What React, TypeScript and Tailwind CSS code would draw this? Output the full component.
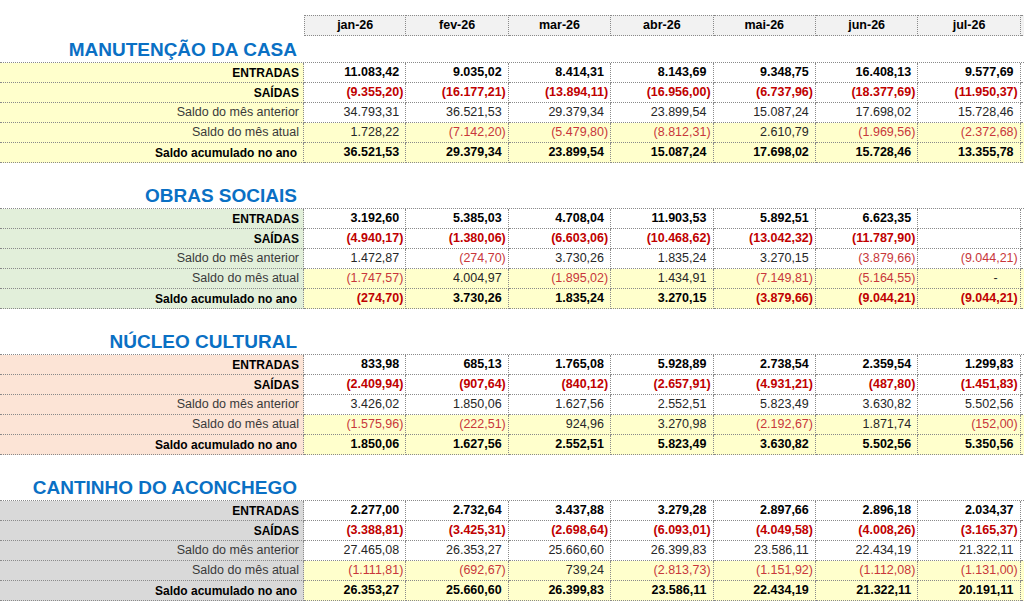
type Section = {
  title: string;
  labelBg: string;
  rows: string[][]; // entradas, saidas, anterior, atual, acumulado
};

const months = ["jan-26", "fev-26", "mar-26", "abr-26", "mai-26", "jun-26", "jul-26", ""];

const rowLabels = [
  { text: "ENTRADAS", bold: true },
  { text: "SAÍDAS", bold: true },
  { text: "Saldo do mês anterior", bold: false },
  { text: "Saldo do mês atual", bold: false },
  { text: "Saldo acumulado no ano", bold: true },
];

const sections: Section[] = [
  {
    title: "MANUTENÇÃO DA CASA",
    labelBg: "bg-[#ffffcc]",
    rows: [
      ["11.083,42", "9.035,02", "8.414,31", "8.143,69", "9.348,75", "16.408,13", "9.577,69"],
      ["(9.355,20)", "(16.177,21)", "(13.894,11)", "(16.956,00)", "(6.737,96)", "(18.377,69)", "(11.950,37)"],
      ["34.793,31", "36.521,53", "29.379,34", "23.899,54", "15.087,24", "17.698,02", "15.728,46"],
      ["1.728,22", "(7.142,20)", "(5.479,80)", "(8.812,31)", "2.610,79", "(1.969,56)", "(2.372,68)"],
      ["36.521,53", "29.379,34", "23.899,54", "15.087,24", "17.698,02", "15.728,46", "13.355,78"],
    ],
  },
  {
    title: "OBRAS SOCIAIS",
    labelBg: "bg-[#e2efda]",
    rows: [
      ["3.192,60", "5.385,03", "4.708,04", "11.903,53", "5.892,51", "6.623,35", ""],
      ["(4.940,17)", "(1.380,06)", "(6.603,06)", "(10.468,62)", "(13.042,32)", "(11.787,90)", ""],
      ["1.472,87", "(274,70)", "3.730,26", "1.835,24", "3.270,15", "(3.879,66)", "(9.044,21)"],
      ["(1.747,57)", "4.004,97", "(1.895,02)", "1.434,91", "(7.149,81)", "(5.164,55)", "-"],
      ["(274,70)", "3.730,26", "1.835,24", "3.270,15", "(3.879,66)", "(9.044,21)", "(9.044,21)"],
    ],
  },
  {
    title: "NÚCLEO CULTURAL",
    labelBg: "bg-[#fce4d6]",
    rows: [
      ["833,98", "685,13", "1.765,08", "5.928,89", "2.738,54", "2.359,54", "1.299,83"],
      ["(2.409,94)", "(907,64)", "(840,12)", "(2.657,91)", "(4.931,21)", "(487,80)", "(1.451,83)"],
      ["3.426,02", "1.850,06", "1.627,56", "2.552,51", "5.823,49", "3.630,82", "5.502,56"],
      ["(1.575,96)", "(222,51)", "924,96", "3.270,98", "(2.192,67)", "1.871,74", "(152,00)"],
      ["1.850,06", "1.627,56", "2.552,51", "5.823,49", "3.630,82", "5.502,56", "5.350,56"],
    ],
  },
  {
    title: "CANTINHO DO ACONCHEGO",
    labelBg: "bg-[#d9d9d9]",
    rows: [
      ["2.277,00", "2.732,64", "3.437,88", "3.279,28", "2.897,66", "2.896,18", "2.034,37"],
      ["(3.388,81)", "(3.425,31)", "(2.698,64)", "(6.093,01)", "(4.049,58)", "(4.008,26)", "(3.165,37)"],
      ["27.465,08", "26.353,27", "25.660,60", "26.399,83", "23.586,11", "22.434,19", "21.322,11"],
      ["(1.111,81)", "(692,67)", "739,24", "(2.813,73)", "(1.151,92)", "(1.112,08)", "(1.131,00)"],
      ["26.353,27", "25.660,60", "26.399,83", "23.586,11", "22.434,19", "21.322,11", "20.191,11"],
    ],
  },
];

const grid = "grid grid-cols-[304px_repeat(8,102.4px)]";
const cellBorder = "border-r border-b border-dotted border-[#8a8a8a]";

function NumberCell({ value, bold, yellow }: { value: string; bold: boolean; yellow: boolean }) {
  const neg = value.startsWith("(");
  const color = neg ? (bold ? "text-[#c00000]" : "text-[#c8373a]") : bold ? "text-black" : "text-[#262626]";
  return (
    <div
      className={`${cellBorder} flex h-[20px] items-center justify-end pr-[2px] text-[12.5px] ${
        bold ? "font-bold" : ""
      } ${yellow ? "bg-[#ffffcc]" : "bg-white"} ${color}`}
    >
      {value === "-" ? (
        <span className="pr-[20px]">-</span>
      ) : value ? (
        <span>
          {value}
          {!neg && <span className="invisible">)</span>}
        </span>
      ) : null}
    </div>
  );
}

function SectionBlock({ section, first }: { section: Section; first: boolean }) {
  return (
    <div>
      {!first && <div className="h-[19px]" />}
      <div className={grid}>
        <div className="flex h-[26px] items-center justify-end pr-[7px] text-[19px] font-bold leading-none text-[#0a70c4]">
          {section.title}
        </div>
      </div>
      <div className={`${grid} border-t border-dotted border-[#8a8a8a]`}>
        {section.rows.map((row, ri) => {
          const lbl = rowLabels[ri];
          const yellow = ri >= 3;
          return [
            <div
              key={`l${ri}`}
              className={`${cellBorder} ${section.labelBg} flex h-[20px] items-center justify-end ${
                ri === 4 ? "pr-[6px]" : "pr-[4px]"
              } ${lbl.bold ? "text-[12px] font-bold text-black" : "text-[12.5px] text-[#3a3a3a]"}`}
            >
              {lbl.text}
            </div>,
            ...row.map((v, ci) => (
              <NumberCell key={`c${ri}-${ci}`} value={v} bold={lbl.bold} yellow={yellow} />
            )),
            <NumberCell key={`x${ri}`} value="" bold={false} yellow={yellow} />,
          ];
        })}
      </div>
    </div>
  );
}

export default function App() {
  return (
    <div
      className="h-[603px] w-[1024px] overflow-hidden bg-white pt-[15px]"
      style={{ fontFamily: '"Liberation Sans", Arial, sans-serif' }}
    >
      <div className={grid}>
        <div className="h-[21px]" />
        {months.map((m, i) => (
          <div
            key={i}
            className={`flex h-[21px] items-center justify-center border-t border-b border-r border-dotted border-[#8a8a8a] bg-[#f2f2f2] text-[12.5px] font-bold text-black ${
              i === 0 ? "border-l" : ""
            }`}
          >
            {m}
          </div>
        ))}
      </div>
      {sections.map((s, i) => (
        <SectionBlock key={s.title} section={s} first={i === 0} />
      ))}
    </div>
  );
}
